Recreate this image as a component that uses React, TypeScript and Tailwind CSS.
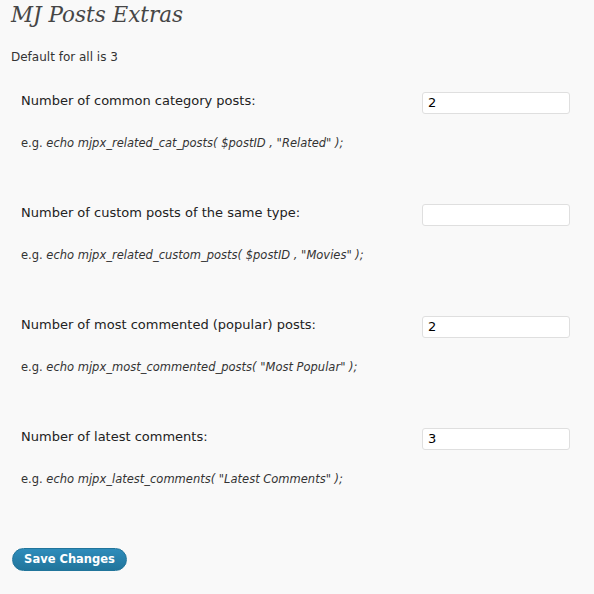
import React from "react";

const rows = [
  { label: "Number of common category posts:", code: 'echo mjpx_related_cat_posts( $postID , "Related" );', value: "2" },
  { label: "Number of custom posts of the same type:", code: 'echo mjpx_related_custom_posts( $postID , "Movies" );', value: "" },
  { label: "Number of most commented (popular) posts:", code: 'echo mjpx_most_commented_posts( "Most Popular" );', value: "2" },
  { label: "Number of latest comments:", code: 'echo mjpx_latest_comments( "Latest Comments" );', value: "3" },
];

export default function App() {
  return (
    <div className="w-[594px] h-[594px] bg-[#f9f9f9] text-[#333] overflow-hidden" style={{ fontFamily: '"DejaVu Sans", Verdana, sans-serif' }}>
      <h2 className="pl-[11px] pt-[1px] text-[21.5px] leading-[28px] italic text-[#464646]" style={{ fontFamily: '"DejaVu Serif", Georgia, serif' }}>
        MJ Posts Extras
      </h2>
      <p className="pl-[11px] mt-[21px] text-[12px] leading-[15px] text-[#333]">Default for all is 3</p>
      <div className="mt-[25px] flex flex-col">
        {rows.map((r) => (
          <div key={r.label} className="flex h-[112px] items-start">
            <div className="w-[401px] pl-[21px]">
              <div className="text-[13px] leading-[22px] text-[#222]">{r.label}</div>
              <div className="mt-[24px] text-[11.5px] leading-[14px] text-[#333]">
                e.g. <i>{r.code}</i>
              </div>
            </div>
            <div className="pl-[21px]">
              <input
                defaultValue={r.value}
                className="w-[148px] h-[22px] bg-white border border-[#dfdfdf] rounded-[3px] px-[5px] text-[13px] text-black outline-none"
                style={{ fontFamily: '"DejaVu Sans", Verdana, sans-serif' }}
              />
            </div>
          </div>
        ))}
      </div>
      <div className="pl-[12px] mt-[8px]">
        <button className="w-[115px] h-[23px] rounded-full bg-gradient-to-b from-[#2e8cbb] to-[#21759b] border border-[#21759b] text-white text-[11.5px] font-bold">
          Save Changes
        </button>
      </div>
    </div>
  );
}
